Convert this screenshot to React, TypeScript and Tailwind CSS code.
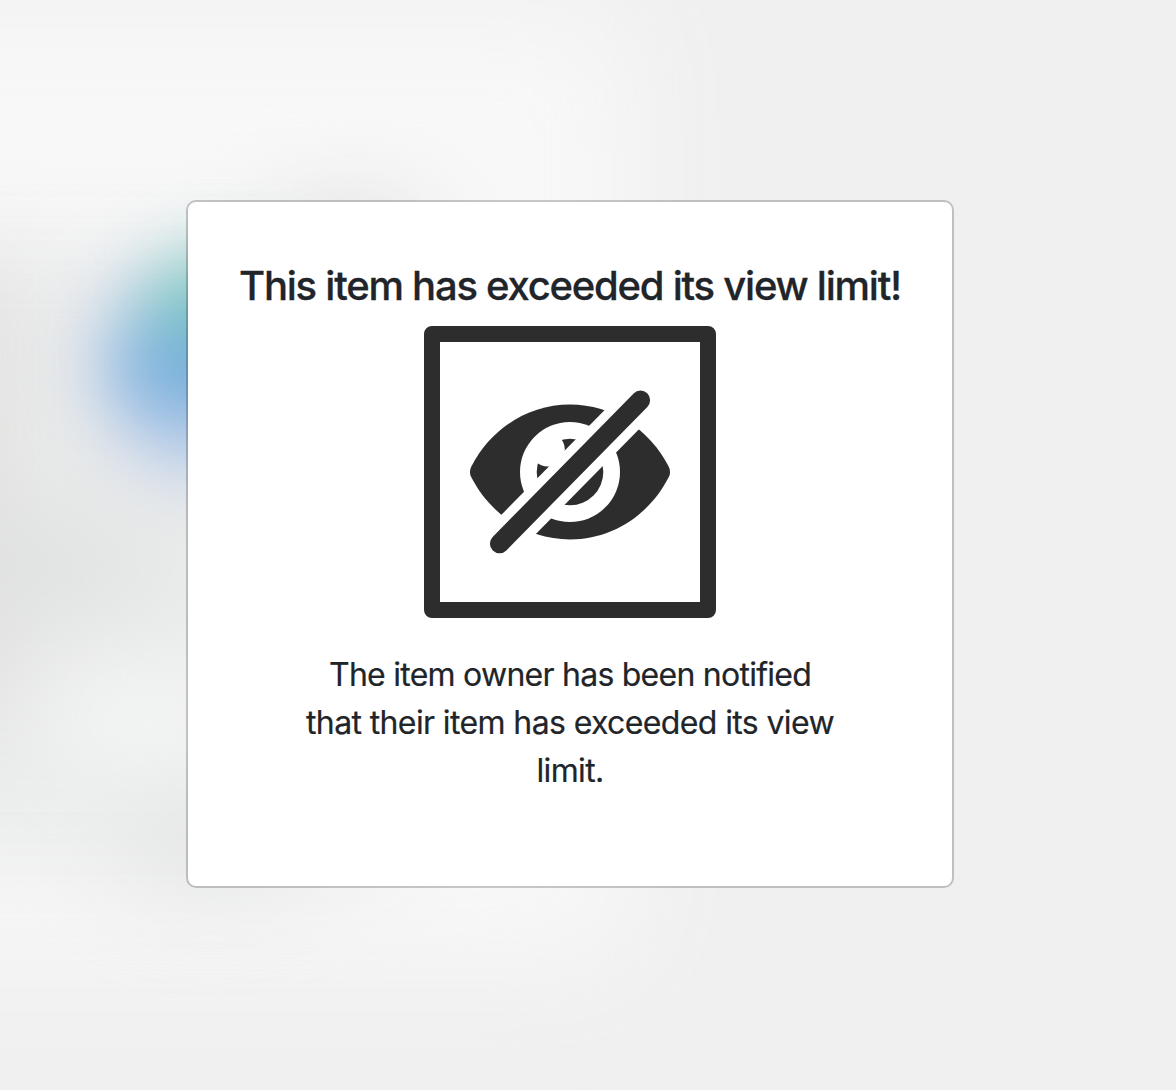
function HiddenEyeIcon() {
  return (
    <svg viewBox="440 342 260 260" className="block h-[260px] w-[260px]" aria-label="View limit reached">
      <path
        transform="translate(470 382) scale(.3472 .3515)"
        fill="#2d2d2d"
        d="M572.52 241.4C518.29 135.59 410.93 64 288 64S57.68 135.64 3.48 241.41a32.35 32.35 0 0 0 0 29.19C57.71 376.41 165.07 448 288 448s230.32-71.64 284.52-177.41a32.35 32.35 0 0 0 0-29.19z"
      />
      <circle cx="570" cy="472" r="50" fill="#fff" />
      <circle cx="570" cy="472" r="33.3" fill="#2d2d2d" />
      <circle cx="547.8" cy="449.5" r="17" fill="#fff" />
      <path d="M655 386 485 558.5" stroke="#fff" strokeWidth="38" />
      <path d="M640.5 400.2 499.5 543.7" stroke="#2d2d2d" strokeWidth="19.2" strokeLinecap="round" />
    </svg>
  );
}

/* Out-of-focus artwork behind the dialog */
function Backdrop() {
  return (
    <svg
      viewBox="0 0 1176 1090"
      className="absolute inset-0 h-full w-full"
      preserveAspectRatio="none"
      aria-hidden="true"
    >
      <defs>
        <filter id="wide" x="-50%" y="-50%" width="200%" height="200%" colorInterpolationFilters="sRGB">
          <feGaussianBlur stdDeviation="60" />
        </filter>
        <filter id="soft" x="-100%" y="-100%" width="300%" height="300%" colorInterpolationFilters="sRGB">
          <feGaussianBlur stdDeviation="48" />
        </filter>
        <filter id="orb" x="-100%" y="-100%" width="300%" height="300%" colorInterpolationFilters="sRGB">
          <feGaussianBlur stdDeviation="34" />
        </filter>
      </defs>
      <rect width="1176" height="1090" fill="#f0f0f0" />
      <rect x="-300" y="10" width="930" height="950" fill="#f8f8f8" filter="url(#wide)" />
      <rect x="-200" y="250" width="600" height="615" fill="#ebecec" filter="url(#soft)" />
      <g filter="url(#soft)">
        <rect x="290" y="210" width="120" height="220" fill="#dddddd" />
        <rect x="-90" y="270" width="90" height="450" fill="#dededc" />
        <ellipse cx="65" cy="565" rx="90" ry="60" fill="#e0e3e2" />
        <ellipse cx="150" cy="722" rx="110" ry="48" fill="#f5f7f6" />
        <ellipse cx="210" cy="838" rx="100" ry="45" fill="#e3e4e5" />
      </g>
      <g filter="url(#orb)">
        <circle cx="206" cy="364" r="112" fill="#b8cbe9" />
        <ellipse cx="235" cy="320" rx="94" ry="66" fill="#7dccbd" />
        <ellipse cx="192" cy="368" rx="76" ry="46" fill="#76afdb" />
      </g>
    </svg>
  );
}

export default function App() {
  return (
    <main className="relative flex h-[1090px] w-full items-start overflow-hidden pl-[186px] pt-[200px] font-['Inter',sans-serif] text-[#212529]">
      <Backdrop />
      <section className="relative flex h-[688px] w-[768px] flex-col items-center rounded-[10px] border-2 border-black/20 bg-white bg-clip-padding pt-[60px] text-center">
        <h1 className="whitespace-nowrap text-[40px] font-medium leading-[48px] tracking-[-1.24px] [-webkit-text-stroke:0.3px_#212529]">
          This item has exceeded its view limit!
        </h1>
        <div className="mt-4 rounded-lg border-16 border-[#2d2d2d] bg-white">
          <HiddenEyeIcon />
        </div>
        <p className="mt-[33px] whitespace-nowrap text-[32px] leading-[48px] tracking-[-0.62px] [-webkit-text-stroke:0.2px_#212529]">
          <span className="tracking-[-0.75px]">The item owner has been notified</span>
          <br />
          that their item has exceeded its view
          <br />
          limit.
        </p>
      </section>
    </main>
  );
}
